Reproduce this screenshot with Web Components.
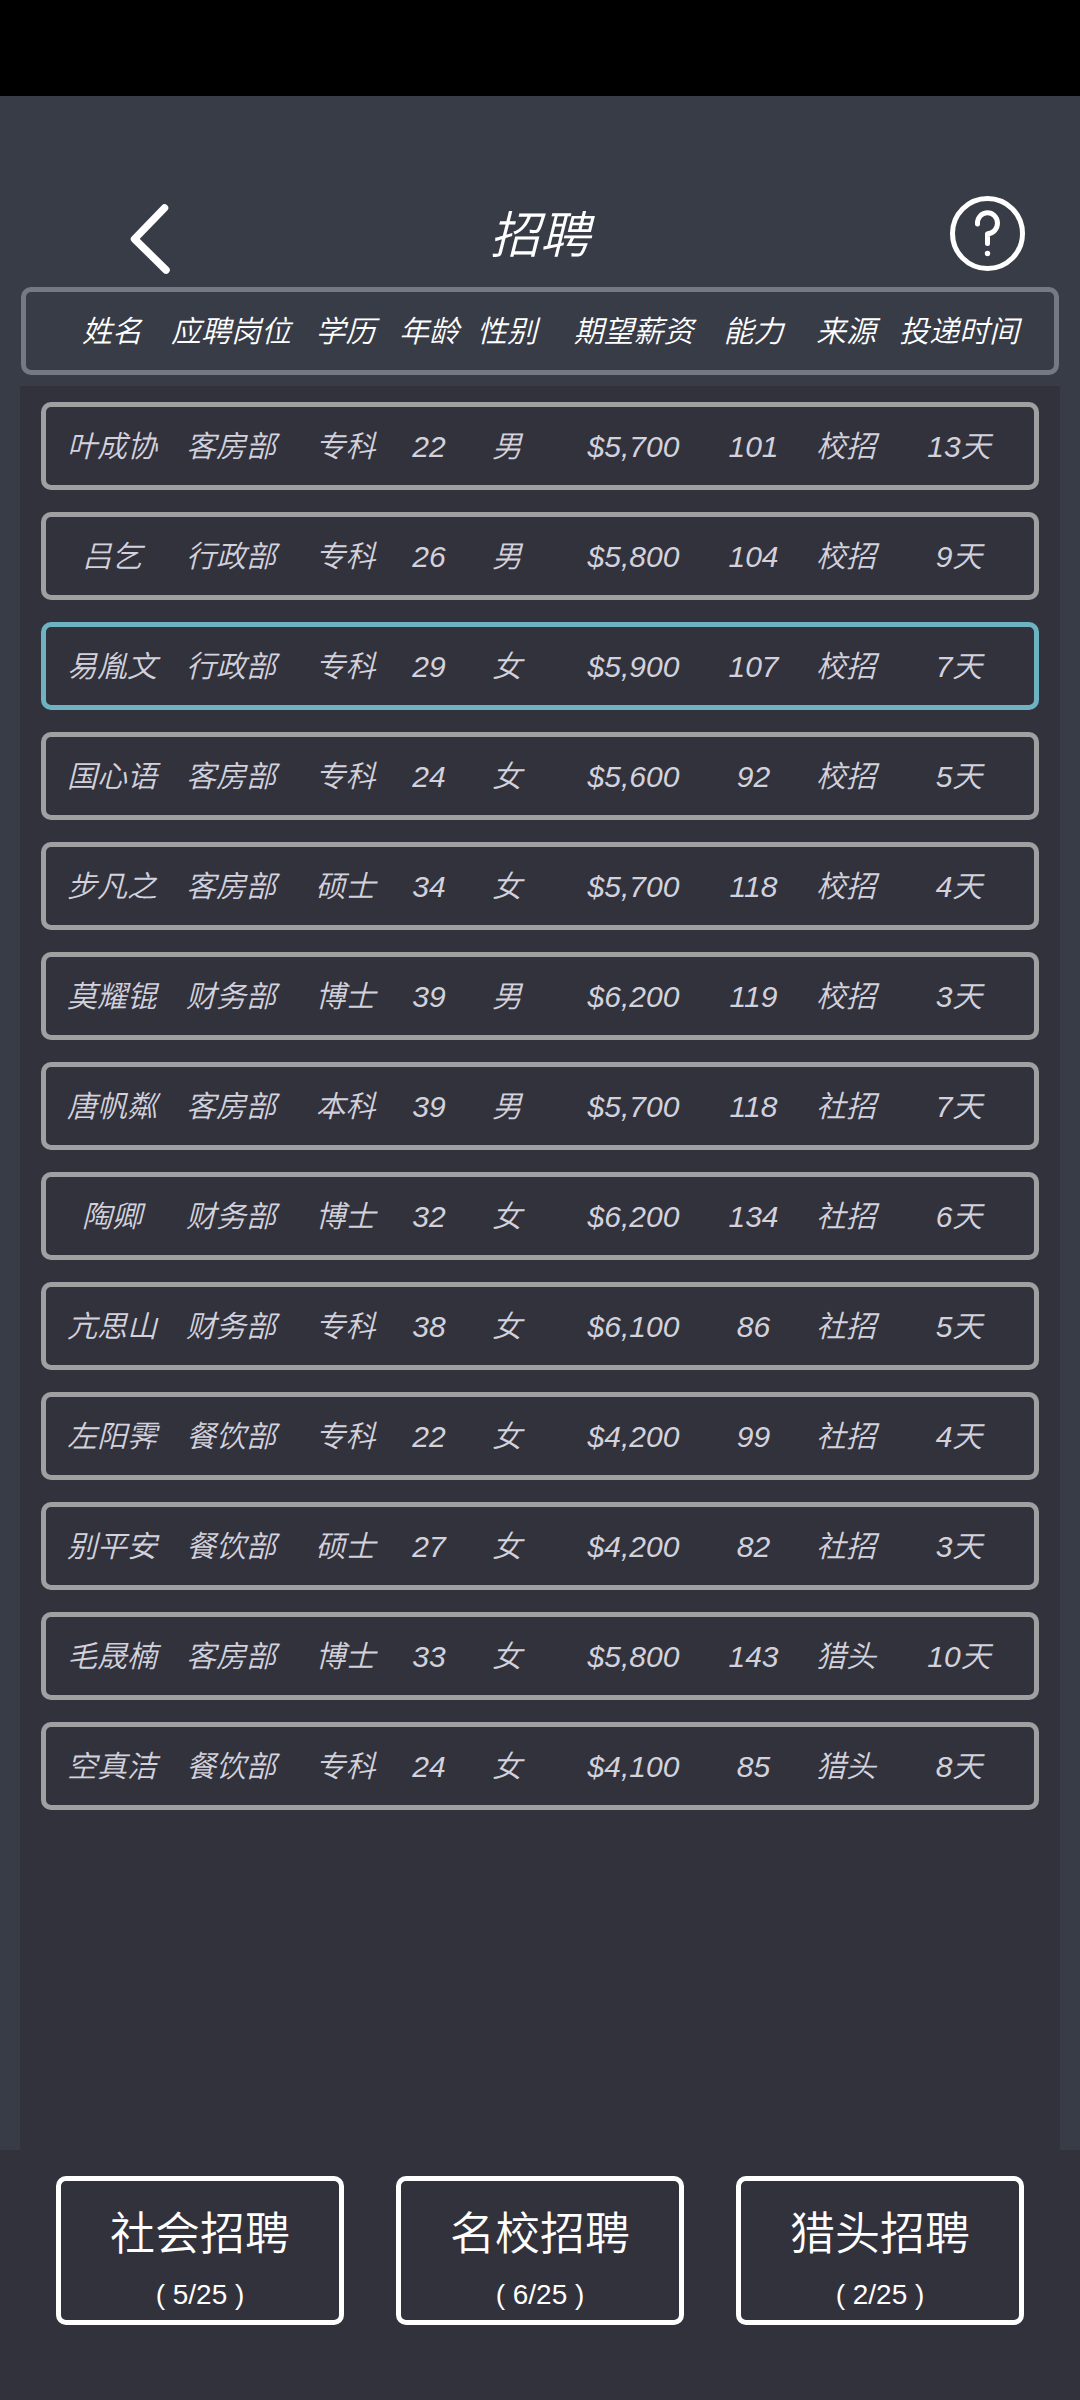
<!DOCTYPE html>
<html lang="zh-CN">
<head>
<meta charset="utf-8">
<meta name="viewport" content="width=device-width, initial-scale=1">
<title>招聘</title>
<style>
  body {
    margin: 0;
    background: #383c47;
    color: #ffffff;
    font-family: "Liberation Sans", "Noto Sans CJK SC", sans-serif;
    font-weight: 350;
  }
</style>
</head>
<body>

<recruit-screen>
  <recruit-header slot="header">招聘</recruit-header>
  <applicant-table></applicant-table>
  <recruit-button slot="actions" count="5" max="25">社会招聘</recruit-button>
  <recruit-button slot="actions" count="6" max="25">名校招聘</recruit-button>
  <recruit-button slot="actions" count="2" max="25">猎头招聘</recruit-button>
</recruit-screen>

<script>
const COLUMNS = ['姓名', '应聘岗位', '学历', '年龄', '性别', '期望薪资', '能力', '来源', '投递时间'];

const APPLICANTS = [
  ['叶成协', '客房部', '专科', 22, '男', '$5,700', 101, '校招', '13天'],
  ['吕乞', '行政部', '专科', 26, '男', '$5,800', 104, '校招', '9天'],
  ['易胤文', '行政部', '专科', 29, '女', '$5,900', 107, '校招', '7天'],
  ['国心语', '客房部', '专科', 24, '女', '$5,600', 92, '校招', '5天'],
  ['步凡之', '客房部', '硕士', 34, '女', '$5,700', 118, '校招', '4天'],
  ['莫耀锟', '财务部', '博士', 39, '男', '$6,200', 119, '校招', '3天'],
  ['唐帆粼', '客房部', '本科', 39, '男', '$5,700', 118, '社招', '7天'],
  ['陶卿', '财务部', '博士', 32, '女', '$6,200', 134, '社招', '6天'],
  ['亢思山', '财务部', '专科', 38, '女', '$6,100', 86, '社招', '5天'],
  ['左阳霁', '餐饮部', '专科', 22, '女', '$4,200', 99, '社招', '4天'],
  ['别平安', '餐饮部', '硕士', 27, '女', '$4,200', 82, '社招', '3天'],
  ['毛晟楠', '客房部', '博士', 33, '女', '$5,800', 143, '猎头', '10天'],
  ['空真洁', '餐饮部', '专科', 24, '女', '$4,100', 85, '猎头', '8天'],
];

const SELECTED = 2;

// Page frame: status strip, header, list, bottom actions
class RecruitScreen extends HTMLElement {
  constructor() {
    super();
    this.attachShadow({ mode: 'open' });
  }

  connectedCallback() {
    this.shadowRoot.innerHTML = `
      <style>
        :host {
          display: flex;
          flex-direction: column;
          min-height: 100vh;
        }
        .status {
          height: 96px;
          background: #000000;
        }
        main {
          flex: 1;
          display: flex;
          flex-direction: column;
        }
        footer {
          display: grid;
          grid-template-columns: repeat(3, 1fr);
          gap: 52px;
          padding: 26px 56px 75px;
          background: #32323d;
        }
      </style>
      <div class="status"></div>
      <slot name="header"></slot>
      <main><slot></slot></main>
      <footer><slot name="actions"></slot></footer>
    `;
  }
}

class RecruitHeader extends HTMLElement {
  constructor() {
    super();
    this.attachShadow({ mode: 'open' });
  }

  connectedCallback() {
    this.shadowRoot.innerHTML = `
      <style>
        :host {
          display: grid;
          grid-template-columns: 1fr auto 1fr;
          align-items: center;
          padding: 98px 52px 13px;
        }
        h1 {
          margin: 0;
          padding-top: 4px;
          font-size: 50px;
          line-height: 76px;
          font-weight: inherit;
          font-style: italic;
        }
        button {
          width: 80px;
          height: 80px;
          padding: 0;
          border: 0;
          background: none;
          color: inherit;
        }
        .back { margin-left: 58px; }
        .help { justify-self: end; }
        svg {
          display: block;
          fill: none;
          stroke: currentColor;
          stroke-linecap: round;
          stroke-linejoin: round;
        }
      </style>
      <button class="back" type="button" aria-label="返回">
        <svg width="80" height="80" viewBox="0 0 80 80" stroke-width="7.5">
          <path d="M54.5 14 24.5 45 56 76"/>
        </svg>
      </button>
      <h1><slot></slot></h1>
      <button class="help" type="button" aria-label="帮助">
        <svg width="80" height="80" viewBox="0 0 80 80" stroke-width="5">
          <circle cx="39.5" cy="39.5" r="35"/>
          <path d="M29.5 30A10 10.5 0 1 1 39.5 39.7V49.5"/>
          <circle cx="39.5" cy="59.5" r="2.7" fill="currentColor" stroke="none"/>
        </svg>
      </button>
    `;
  }
}

class ApplicantTable extends HTMLElement {
  constructor() {
    super();
    this.attachShadow({ mode: 'open' });
  }

  connectedCallback() {
    const heads = COLUMNS.map((name) => `<th scope="col">${name}</th>`).join('');
    const rows = APPLICANTS.map((person, i) => `
      <tr${i === SELECTED ? ' class="selected"' : ''}>
        ${person.map((value) => `<td>${value}</td>`).join('')}
      </tr>
    `).join('');

    this.shadowRoot.innerHTML = `
      <style>
        :host {
          flex: 1;
          display: flex;
          flex-direction: column;
          font-size: 30px;
          font-style: italic;
        }
        table {
          flex: 1;
          display: flex;
          flex-direction: column;
          gap: 11px;
        }
        thead {
          display: block;
          margin: 0 21px;
        }
        tbody {
          flex: 1;
          display: flex;
          flex-direction: column;
          gap: 22px;
          margin: 0 20px;
          padding: 16px 21px;
          background: #32323d;
          color: #d3d2dc;
        }
        /* column tracks are shared by the head and every applicant */
        tr {
          display: grid;
          grid-template-columns: 116fr 122fr 107fr 60fr 96fr 157fr 83fr 102fr 124fr;
          padding: 0 13px 0 8px;
          border: 5px solid #a0a0a3;
          border-radius: 10px;
        }
        thead tr {
          padding: 0 33px 0 28px;
          border-color: #757981;
        }
        tr.selected { border-color: #6db3c1; }
        th, td {
          padding: 2px 0 0;
          line-height: 76px;
          font-weight: inherit;
          text-align: center;
          white-space: nowrap;
        }
      </style>
      <table>
        <thead><tr>${heads}</tr></thead>
        <tbody>${rows}</tbody>
      </table>
    `;
  }
}

class RecruitButton extends HTMLElement {
  constructor() {
    super();
    this.attachShadow({ mode: 'open' });
  }

  connectedCallback() {
    const count = this.getAttribute('count');
    const max = this.getAttribute('max');

    this.shadowRoot.innerHTML = `
      <style>
        :host { display: block; }
        button {
          display: flex;
          flex-direction: column;
          align-items: center;
          gap: 12px;
          width: 100%;
          padding: 22px 0 9px;
          border: 5px solid #ffffff;
          border-radius: 10px;
          background: none;
          color: inherit;
          font: inherit;
        }
        .name {
          font-size: 45px;
          line-height: 64px;
        }
        .count {
          font-size: 28px;
          line-height: 32px;
        }
      </style>
      <button type="button">
        <span class="name"><slot></slot></span>
        <span class="count">( ${count}/${max} )</span>
      </button>
    `;
  }
}

customElements.define('recruit-screen', RecruitScreen);
customElements.define('recruit-header', RecruitHeader);
customElements.define('applicant-table', ApplicantTable);
customElements.define('recruit-button', RecruitButton);
</script>
</body>
</html>
